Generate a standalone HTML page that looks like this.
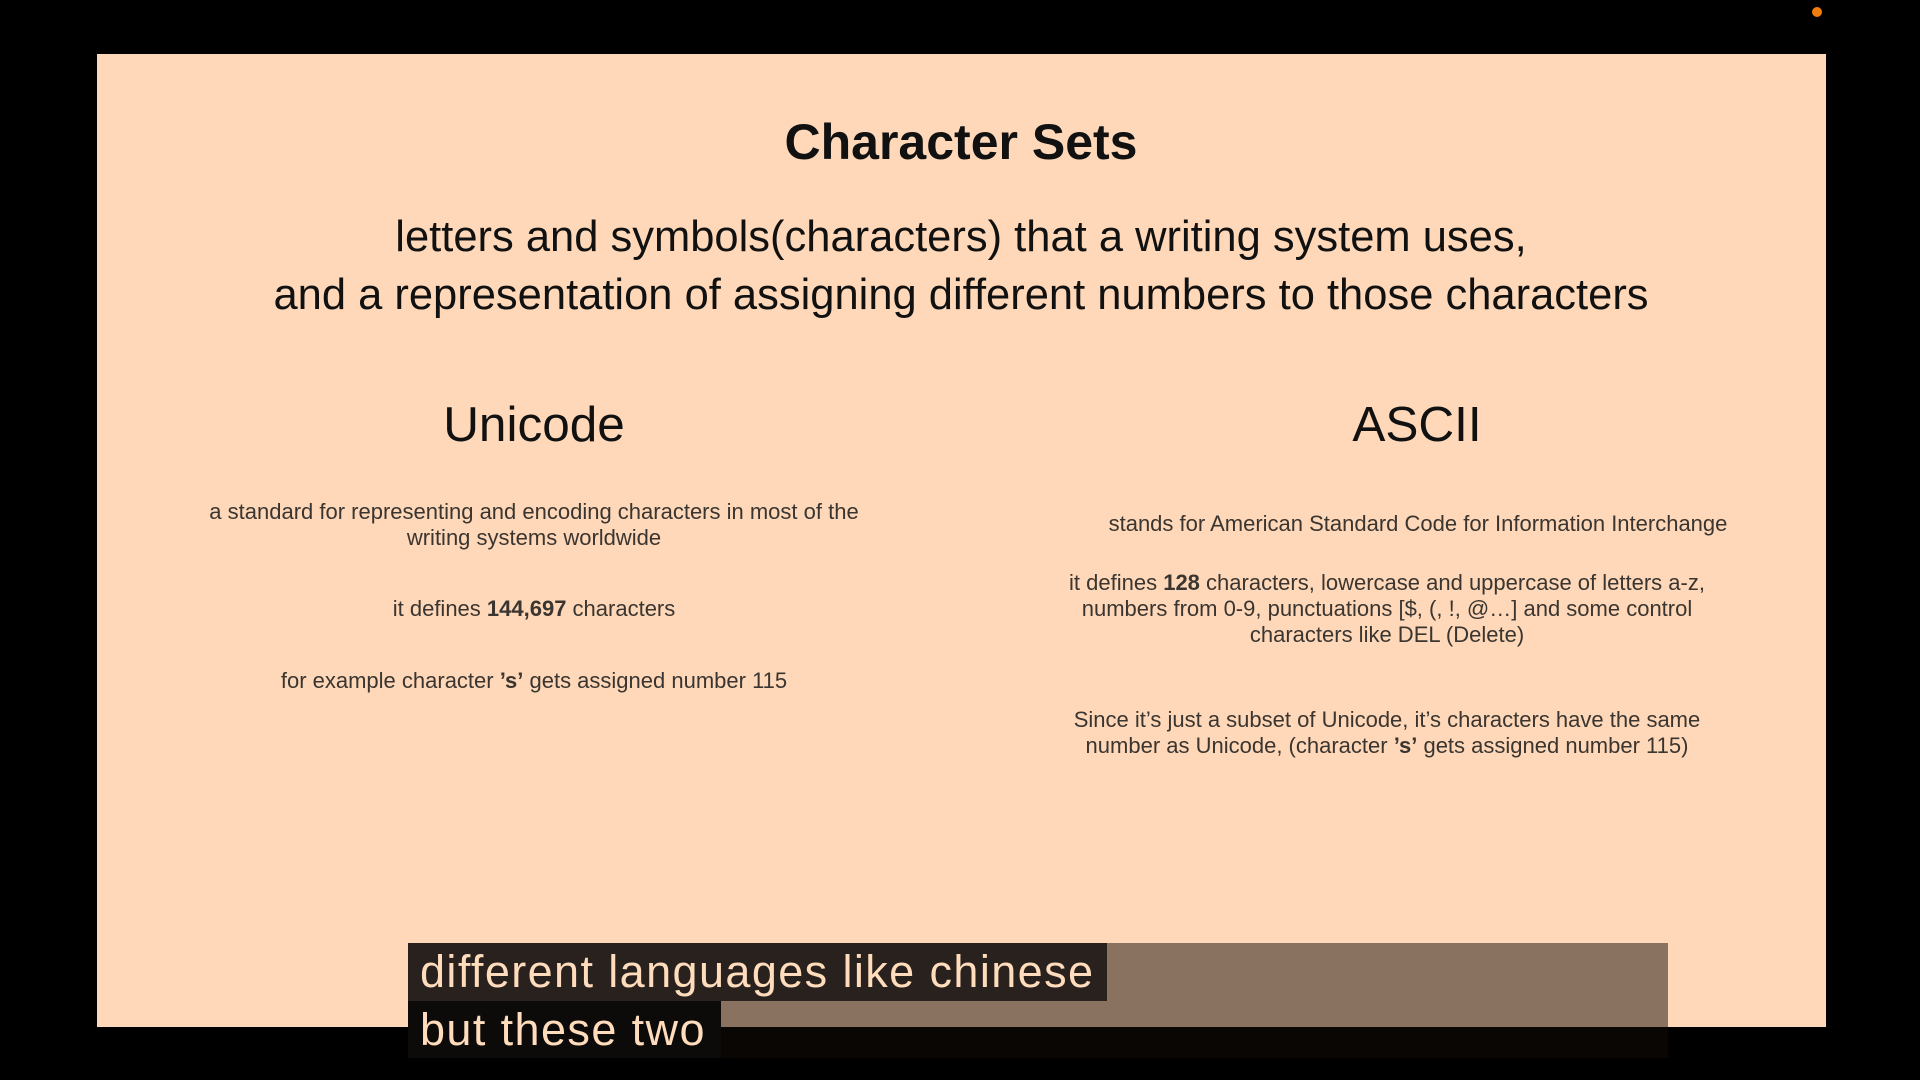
<!DOCTYPE html>
<html><head><meta charset="utf-8"><style>
html,body{margin:0;padding:0;background:#000;width:1920px;height:1080px;overflow:hidden}
body{position:relative;font-family:"Liberation Sans",Arial,sans-serif}
.slide{position:absolute;left:97px;top:54px;width:1729px;height:973px;background:#fed8b8}
.c{position:absolute;width:1400px;text-align:center;white-space:nowrap}
.t{color:#111}
.s{color:#3a3530;font-size:22px;line-height:26px}
.dot{position:absolute;left:1812px;top:7px;width:10px;height:10px;border-radius:50%;background:#f07d0c}
.cap{position:absolute;font-size:45px;color:#fedcbc;line-height:58px;letter-spacing:1.4px}
</style></head><body>
<div class="dot"></div>
<div class="slide"></div>
<div class="c t" style="left:261px;top:113px;font-size:50px;font-weight:bold;line-height:58px">Character Sets</div>
<div class="c t" style="left:261px;top:208px;font-size:43.5px;line-height:58px">letters and symbols(characters) that a writing system uses,<br>and a representation of assigning different numbers to those characters</div>
<div class="c t" style="left:-166px;top:396px;font-size:49.5px;line-height:58px">Unicode</div>
<div class="c t" style="left:717px;top:396px;font-size:49.5px;line-height:58px">ASCII</div>
<div class="c s" style="left:-166px;top:499px">a standard for representing and encoding characters in most of the<br>writing systems worldwide</div>
<div class="c s" style="left:-166px;top:596px">it defines <b>144,697</b> characters</div>
<div class="c s" style="left:-166px;top:668px">for example character <b>’s’</b> gets assigned number 115</div>
<div class="c s" style="left:718px;top:511px">stands for American Standard Code for Information Interchange</div>
<div class="c s" style="left:687px;top:570px">it defines <b>128</b> characters, lowercase and uppercase of letters a-z,<br>numbers from 0-9, punctuations [$, (, !, @…] and some control<br>characters like DEL (Delete)</div>
<div class="c s" style="left:687px;top:707px">Since it’s just a subset of Unicode, it’s characters have the same<br>number as Unicode, (character <b>’s’</b> gets assigned number 115)</div>
<div style="position:absolute;left:408px;top:943px;width:1260px;height:115px;background:rgba(20,12,5,0.5)"></div>
<div style="position:absolute;left:408px;top:943px;width:699px;height:58px;background:#28211d"></div>
<div style="position:absolute;left:408px;top:1001px;width:313px;height:57px;background:#0d0b0a"></div>
<div class="cap" style="left:420px;top:943px">different languages like chinese</div>
<div class="cap" style="left:420px;top:1001px">but these two</div>
</body></html>
